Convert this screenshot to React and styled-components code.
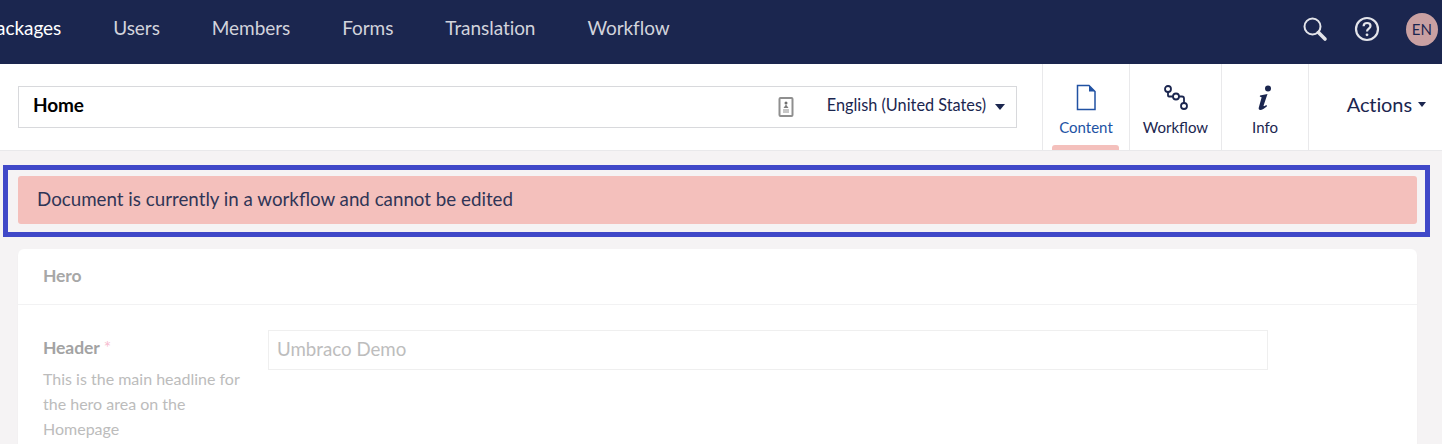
import React from "react";
import styled, { createGlobalStyle } from "styled-components";

const Global = createGlobalStyle`
  html, body { margin: 0; padding: 0; height: 100%; background: #f5f3f4; overflow: hidden; }
  body { font-family: Lato, "Open Sans", sans-serif; }
  * { box-sizing: border-box; }
`;

const Page = styled.div`width: 1442px; height: 444px; overflow: hidden; background: #f5f3f4;`;

const TopBar = styled.header`
  height: 64px; background: #1b264f; display: flex; align-items: center; justify-content: space-between; overflow: hidden;
`;
const Nav = styled.nav`display: flex; gap: 52px; margin-left: -15px; padding-bottom: 9px;`;
const NavItem = styled.span`
  font-size: 19px; line-height: 22px; letter-spacing: -0.06px; white-space: nowrap;
  color: ${p => (p.$active ? "#ffffff" : "#d2d3dc")};
`;
const Tools = styled.div`display: flex; align-items: center; gap: 26px; padding-right: 4px; padding-bottom: 6px;`;
const ToolIcon = styled.svg`display: block; width: 26px; height: 26px; fill: none; stroke: #e3e4ea;`;
const Avatar = styled.div`
  width: 32px; height: 33px; border-radius: 50%; background: #c9a0a2; color: #1b264f;
  display: flex; align-items: center; justify-content: center; font-size: 15px; letter-spacing: 0.2px;
`;

const Header = styled.div`
  height: 87px; background: #fff; border-bottom: 1px solid #e9e9eb; display: flex;
`;
const TitleWrap = styled.div`flex: 0 0 1042px; padding: 22px 25px 0 18px;`;
const TitleBox = styled.div`
  height: 42px; border: 1px solid #d8d9dc; display: flex; align-items: center; padding: 0 11px 0 14px;
`;
const Title = styled.div`flex: 1; font-size: 19px; line-height: 22px; padding-bottom: 4px; font-weight: 700; color: #000; letter-spacing: -0.15px;`;
const PageIcon = styled.svg`display: block; width: 16px; height: 20px; margin-right: 33px;`;
const Lang = styled.div`font-size: 16.3px; line-height: 20px; padding-bottom: 4px; color: #1b264f;`;
const Caret = styled.span`
  display: inline-block; width: 0; height: 0; border-left: ${p => p.$s}px solid transparent; border-right: ${p => p.$s}px solid transparent;
  border-top: ${p => p.$s + 1}px solid #1b264f; margin-left: ${p => p.$m}px;
`;
const Tab = styled.div`
  position: relative; width: ${p => p.$w}px; border-left: 1px solid #e9e9eb; display: flex; flex-direction: column; align-items: center;
  padding-top: 20px; color: ${p => (p.$active ? "#2152a3" : "#1b264f")}; font-size: 15px;
`;
const TabIcon = styled.svg`display: block; width: 28px; height: 28px; fill: none; stroke: currentColor;`;
const TabLabel = styled.span`margin-top: 7px; line-height: 17px;`;
const TabMark = styled.span`
  position: absolute; left: 9px; right: 10px; bottom: 0; height: 5px; background: #f4c0bc; border-radius: 3px 3px 0 0;
`;
const Actions = styled.div`
  flex: 1; border-left: 1px solid #e9e9eb; display: flex; align-items: center; justify-content: flex-end; padding: 0 16px 6px 0;
  font-size: 20px; color: #1b264f; letter-spacing: -0.1px;
`;

const Main = styled.main`padding: 14px 12px 0 3px;`;
const Highlight = styled.div`
  height: 72px; border: 5px solid #4048c8; padding: 6px 8px 7px 10px;
`;
const Alert = styled.div`
  height: 48px; border-radius: 3px; background: #f4c0bc; color: #303556; font-size: 18.75px;
  display: flex; align-items: center; padding: 0 0 3px 19px;
`;
const Card = styled.section`
  margin: 12px 13px 0 15px; background: #fff; border-radius: 6px 6px 0 0; height: 220px; box-shadow: 0 1px 1px rgba(0,0,0,.08);
`;
const CardHead = styled.div`
  height: 56px; border-bottom: 1px solid #f2f2f3; padding: 0 25px 2px; display: flex; align-items: center;
  font-size: 17.5px; font-weight: 700; color: #a7a7a7; letter-spacing: -0.1px;
`;
const Row = styled.div`display: grid; grid-template-columns: 225px 1000px; padding: 25px 25px 0;`;
const Label = styled.div`font-size: 17.5px; font-weight: 700; color: #a3a3a3; line-height: 36px; height: 36px; letter-spacing: -0.1px;`;
const Star = styled.span`color: #f7bdd0; font-weight: 400; margin-left: 4px;`;
const Help = styled.div`font-size: 16px; line-height: 25px; color: #bcbcbc; width: 205px;`;
const Field = styled.div`
  height: 40px; border: 1px solid #efefef; display: flex; align-items: center; padding: 0 0 2px 8px; font-size: 18.7px; color: #bdbdbd;
`;

export default function App() {
  return (
    <Page>
      <Global />
      <TopBar>
        <Nav>
          <NavItem $active>Packages</NavItem>
          <NavItem>Users</NavItem>
          <NavItem>Members</NavItem>
          <NavItem>Forms</NavItem>
          <NavItem>Translation</NavItem>
          <NavItem>Workflow</NavItem>
        </Nav>
        <Tools>
          <ToolIcon viewBox="0 0 26 26">
            <circle cx="10.5" cy="10.5" r="8" strokeWidth="2" />
            <path d="M16.5 16.5 L23 23" strokeWidth="3.6" strokeLinecap="round" />
          </ToolIcon>
          <ToolIcon viewBox="0 0 26 26">
            <circle cx="13" cy="13" r="11" strokeWidth="2.2" />
            <path d="M9.6 10.2c0-2 1.5-3.2 3.5-3.2s3.4 1.2 3.4 3c0 2.6-3.5 2.6-3.5 5.4" strokeWidth="2.2" />
            <circle cx="13" cy="18.8" r="1.4" fill="#e3e4ea" stroke="none" />
          </ToolIcon>
          <Avatar>EN</Avatar>
        </Tools>
      </TopBar>
      <Header>
        <TitleWrap>
          <TitleBox>
            <Title>Home</Title>
            <PageIcon viewBox="0 0 16 20">
              <rect x="1.5" y="1" width="13" height="18" rx="1" fill="#fff" stroke="#8f8f8f" strokeWidth="2" />
              <circle cx="8" cy="6" r="1.5" fill="#6f6f6f" />
              <path d="M5.5 11 L8 7.5 L10.5 11 Z" fill="#7d7d7d" />
              <path d="M5 13h6M5 15h6" stroke="#b5b5b5" strokeWidth="1.3" />
            </PageIcon>
            <Lang>English (United States)</Lang>
            <Caret $s={5} $m={9} />
          </TitleBox>
        </TitleWrap>
        <Tab $w={87} $active>
          <TabIcon viewBox="0 0 28 28">
            <path d="M5.5 1.5 H17 L23 7.5 V25.5 H5.5 Z" strokeWidth="1.5" />
            <path d="M17 1.5 L23 7.5 H17 Z" fill="currentColor" stroke="none" />
          </TabIcon>
          <TabLabel>Content</TabLabel>
          <TabMark />
        </Tab>
        <Tab $w={92}>
          <TabIcon viewBox="0 0 28 28" strokeWidth="1.8">
            <circle cx="6" cy="5" r="3" />
            <circle cx="14" cy="12.5" r="3" />
            <circle cx="22" cy="22" r="3" />
            <path d="M6 8v3.5q0 1 1 1h4M17 12.5h3q2 0 2 2V19" />
          </TabIcon>
          <TabLabel>Workflow</TabLabel>
        </Tab>
        <Tab $w={87}>
          <TabIcon viewBox="0 0 28 28">
            <circle cx="17" cy="4.5" r="3" fill="currentColor" stroke="none" />
            <path d="M9 11.5 L16.5 10 L12.6 21.5 Q12.4 23 15.5 21 L16 22.3 Q12 26 9.3 26 Q7.2 25.8 7.8 23.4 L10.6 13.6 Q10.3 12.6 8.8 12.8 Z" fill="currentColor" stroke="none" />
          </TabIcon>
          <TabLabel>Info</TabLabel>
        </Tab>
        <Actions>
          Actions<Caret $s={4} $m={6} />
        </Actions>
      </Header>
      <Main>
        <Highlight>
          <Alert>Document is currently in a workflow and cannot be edited</Alert>
        </Highlight>
        <Card>
          <CardHead>Hero</CardHead>
          <Row>
            <div>
              <Label>Header<Star>*</Star></Label>
              <Help>This is the main headline for the hero area on the Homepage</Help>
            </div>
            <Field>Umbraco Demo</Field>
          </Row>
        </Card>
      </Main>
    </Page>
  );
}
